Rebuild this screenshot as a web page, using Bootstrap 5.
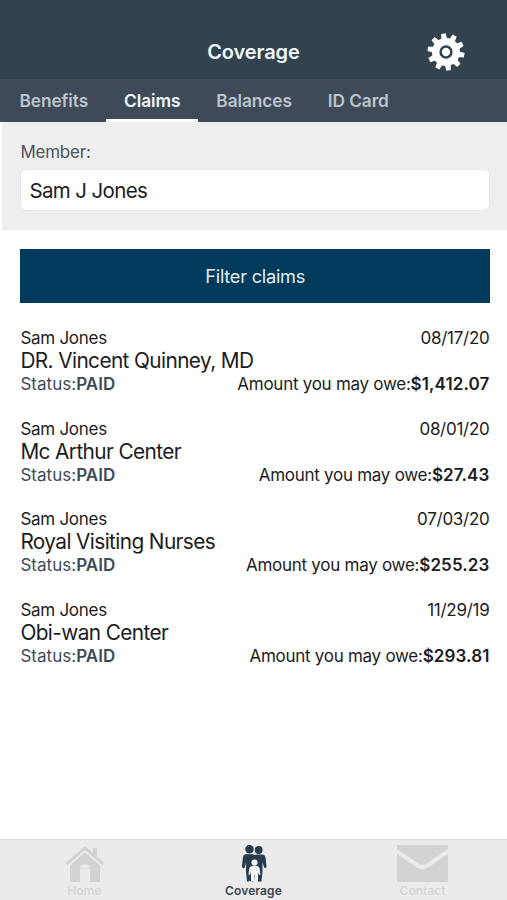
<!DOCTYPE html>
<html lang="en">
<head>
<meta charset="utf-8">
<meta name="viewport" content="width=device-width, initial-scale=1">
<title>Coverage</title>
<link href="https://cdn.jsdelivr.net/npm/bootstrap@5.3.0/dist/css/bootstrap.min.css" rel="stylesheet">
<style>
body{font-family:Inter,"Liberation Sans",sans-serif;color:#1b1c1e;background:#fff;font-size:17px;letter-spacing:-.27px}
.app{height:900px}
.topbar{height:79px;background:#32424f;padding:27px 41px 0 42px}
.topbar h1{font-size:20px;font-weight:600;line-height:50px;color:#eff8ff;letter-spacing:-.1px}
.topbar svg{margin-top:5px}
.topbar-side{width:39px}
.tabs{height:43px;background:#3e4a57;padding-left:1.500px}
.tabs .nav-link{height:43px;padding:0 18px;line-height:43px;font-size:17.3px;letter-spacing:-.08px;font-weight:600;color:#bcc5cd;border-bottom:3px solid transparent}
.tabs .nav-link.active{color:#eff8ff;border-color:#fff}
.member{height:108px;background:#eee;margin-left:2px;padding:19px 17px 0 18.400px}
.member label{font-size:16.9px;line-height:23px;color:#4a525b;letter-spacing:-.15px}
.member .form-control{height:42px;margin-top:5px;border:1px solid #e9e9e9;border-radius:6px;padding:1px 8px 0;font-size:20.5px;letter-spacing:-.62px;color:#1b1c1e}
.claims{padding:19px 17px 0 20.400px}
.filter{height:54px;background:#003b5c;color:#e4edf3;border-radius:0;font-size:18.2px;letter-spacing:-.25px;border:0;padding-top:7px}
.claim-list{padding:23.800px .5px 0 0}
.claim{height:90.8px;line-height:22px}
.provider{font-size:20.8px;line-height:24px;letter-spacing:-.6px}
.totals{font-size:17px;letter-spacing:-.27px}
.totals b{letter-spacing:.12px}
.totals .status,.totals .status b{color:#3c4b59;letter-spacing:.03px}
.bottom{height:61px;background:#ebebeb;border-top:1px solid #d9d9d9;color:#d3d3d3;font-size:12px;letter-spacing:.1px;font-weight:500;line-height:16px}
.bottom a{color:inherit;padding-top:4px}
.bottom a.current{color:#3c4752;font-weight:600}
.bottom svg{height:39px}
</style>
</head>
<body>
<div class="app d-flex flex-column overflow-hidden">
  <header class="topbar d-flex justify-content-between">
    <span class="topbar-side"></span>
    <h1 class="m-0">Coverage</h1>
    <svg width="40" height="40" viewBox="-20 -20 40 40" fill="#fff" aria-label="Settings">
      <defs><path id="tooth" d="M-3-12l.7-6.5h4.6L3-12z"/></defs>
      <circle r="14"/>
      <g transform="rotate(-8)"><use href="#tooth"/><use href="#tooth" transform="rotate(36)"/><use href="#tooth" transform="rotate(72)"/><use href="#tooth" transform="rotate(108)"/><use href="#tooth" transform="rotate(144)"/><use href="#tooth" transform="rotate(180)"/><use href="#tooth" transform="rotate(216)"/><use href="#tooth" transform="rotate(252)"/><use href="#tooth" transform="rotate(288)"/><use href="#tooth" transform="rotate(324)"/></g>
      <circle r="5.4" stroke="#32424f" stroke-width="2.5"/>
    </svg>
  </header>
  <nav class="tabs nav flex-nowrap text-nowrap">
    <a class="nav-link" href="#">Benefits</a>
    <a class="nav-link active" href="#">Claims</a>
    <a class="nav-link" href="#">Balances</a>
    <a class="nav-link" href="#">ID Card</a>
  </nav>
  <section class="member">
    <label class="d-block" for="member">Member:</label>
    <input class="form-control" id="member" value="Sam J Jones">
  </section>
  <main class="claims flex-grow-1">
    <button class="filter btn w-100">Filter claims</button>
    <div class="claim-list">
    <article class="claim">
      <div class="d-flex justify-content-between"><span>Sam Jones</span><span>08/17/20</span></div>
      <div class="provider">DR. Vincent Quinney, MD</div>
      <div class="totals d-flex justify-content-between"><span class="status">Status:<b class="fw-semibold">PAID</b></span><span>Amount you may owe:<b class="fw-semibold">$1,412.07</b></span></div>
    </article>
    <article class="claim">
      <div class="d-flex justify-content-between"><span>Sam Jones</span><span>08/01/20</span></div>
      <div class="provider">Mc Arthur Center</div>
      <div class="totals d-flex justify-content-between"><span class="status">Status:<b class="fw-semibold">PAID</b></span><span>Amount you may owe:<b class="fw-semibold">$27.43</b></span></div>
    </article>
    <article class="claim">
      <div class="d-flex justify-content-between"><span>Sam Jones</span><span>07/03/20</span></div>
      <div class="provider">Royal Visiting Nurses</div>
      <div class="totals d-flex justify-content-between"><span class="status">Status:<b class="fw-semibold">PAID</b></span><span>Amount you may owe:<b class="fw-semibold">$255.23</b></span></div>
    </article>
    <article class="claim">
      <div class="d-flex justify-content-between"><span>Sam Jones</span><span>11/29/19</span></div>
      <div class="provider">Obi-wan Center</div>
      <div class="totals d-flex justify-content-between"><span class="status">Status:<b class="fw-semibold">PAID</b></span><span>Amount you may owe:<b class="fw-semibold">$293.81</b></span></div>
    </article>
    </div>
  </main>
  <nav class="bottom d-flex">
    <a class="col-4 d-flex flex-column align-items-center text-decoration-none" href="#">
      <svg width="40" height="39" viewBox="0 0 40 39" fill="currentColor"><path d="M20 2l8 7V4h4v8.500l7.500 6.500-2 2.300L20 6 2.500 21.300l-2-2.300z"/><path d="M20 8.500L35 21.500V38H25V24.500H15V38H5V21.500z"/><path d="M15.500 21.800q4.500-3 9 0v2h-9z" fill="#ebebeb"/></svg>
      <span>Home</span>
    </a>
    <a class="col-4 current d-flex flex-column align-items-center text-decoration-none" href="#">
      <svg width="28" height="39" viewBox="0 0 28 39" fill="#263c4d"><circle cx="9.500" cy="5.200" r="4.200"/><circle cx="18.700" cy="6" r="3.900"/><path d="M5 10.300h7.500q1.500 0 2 .8.5-.6 2-.6h5.500q3 0 3.500 3l1 8.500q.1 2-1.200 2.200-1.100 0-1.500-1.700L22.500 18v9.500l-1 10h-3.800l-3-8-.7 8h-3.500l-1-1-.8 1H7L6 28V18l-1 4.800q-.4 1.700-1.800 1.500T2 22l.8-8q.3-3 2.200-3.700z"/><g fill="#f3f5f6"><circle cx="14.500" cy="18.600" r="3.100"/><path d="M12.200 22h4.600q2.400 0 2.800 2.500l.8 5.500q0 1.100-1 1.100T18 26.500v11h-3V31h-1v6.500h-3v-11q-.5 4.600-1.500 4.600t-1-1.100l.8-5.500q.4-2.500 2.900-2.500z"/></g></svg>
      <span>Coverage</span>
    </a>
    <a class="col-4 d-flex flex-column align-items-center text-decoration-none" href="#">
      <svg width="51" height="39" viewBox="0 0 51 39" fill="currentColor"><path d="M0 1h51v4L29.500 19.500q-4 2.500-8 0L0 5z"/><path d="M0 9.500l18.500 13.300q7 4.500 14 0L51 9.500V38H0z"/></svg>
      <span>Contact</span>
    </a>
  </nav>
</div>
<script src="https://cdn.jsdelivr.net/npm/bootstrap@5.3.0/dist/js/bootstrap.bundle.min.js"></script>
</body>
</html>
